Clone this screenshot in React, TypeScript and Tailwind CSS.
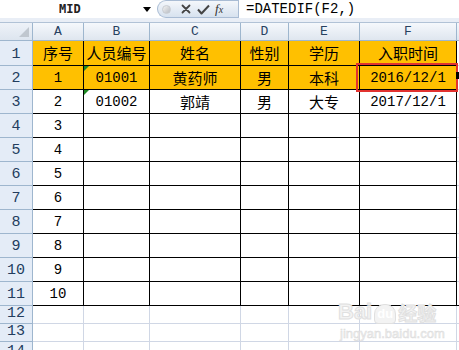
import React from "react";

const COLS = ["A", "B", "C", "D", "E", "F"];
const rows: string[][] = [
  ["序号", "人员编号", "姓名", "性别", "学历", "入职时间"],
  ["1", "01001", "黄药师", "男", "本科", "2016/12/1"],
  ["2", "01002", "郭靖", "男", "大专", "2017/12/1"],
  ["3", "", "", "", "", ""],
  ["4", "", "", "", "", ""],
  ["5", "", "", "", "", ""],
  ["6", "", "", "", "", ""],
  ["7", "", "", "", "", ""],
  ["8", "", "", "", "", ""],
  ["9", "", "", "", "", ""],
  ["10", "", "", "", "", ""],
];

const cjk = "font-['Noto_Sans_CJK_SC',sans-serif]";
const mono = "font-['Liberation_Mono','Noto_Sans_CJK_SC',monospace]";

function isCjk(s: string) {
  return /[\u4e00-\u9fff]/.test(s);
}

export default function App() {
  const rowHeights = [25, 24, 24, 24, 24, 24, 24, 24, 24, 24, 24];
  return (
    <div className="relative w-[459px] h-[350px] overflow-hidden bg-white">
      {/* formula bar */}
      <div className="flex h-[18px] bg-white">
        <div className="relative w-[157px] flex items-center">
          <span className="absolute left-[59px] top-[2px] text-[12px] leading-[14px] font-bold text-[#222] font-['DejaVu_Sans_Mono',monospace]">
            MID
          </span>
          <span className="absolute left-[143px] top-[7px] w-0 h-0 border-l-[4px] border-r-[4px] border-t-[5px] border-l-transparent border-r-transparent border-t-black" />
        </div>
        <div className="relative w-[81px] h-[18px] rounded-l-full border border-r-0 border-[#a9bcd4] bg-gradient-to-b from-[#f4f7fb] to-[#d7e2ef] flex items-center">
          <span className="ml-[4px] w-[9px] h-[9px] rounded-full bg-gradient-to-br from-[#f4f4f4] to-[#b8bcc2] border border-[#c8ccd2]" />
          <svg className="ml-[10px]" width="10" height="10" viewBox="0 0 10 10">
            <path d="M1.5 1.5 L8.5 8.5 M8.5 1.5 L1.5 8.5" stroke="#444" strokeWidth="1.8" strokeLinecap="round" />
          </svg>
          <svg className="ml-[6px]" width="13" height="11" viewBox="0 0 13 11">
            <path d="M1 5.5 L4.5 9.5 L12 1.5" stroke="#444" strokeWidth="2" fill="none" strokeLinejoin="round" />
          </svg>
          <span className="ml-[5px] text-[13px] leading-[14px] italic font-['Liberation_Serif',serif] text-[#333]">
            f<span className="text-[10px]">x</span>
          </span>
        </div>
        <div className="flex-1 border-l border-[#a9bcd4] flex items-center pl-[7px]">
          <span className={`text-[14px] leading-[16px] text-black ${mono}`}>=DATEDIF(F2,)</span>
        </div>
      </div>
      <div className="h-[5px] bg-[#e9eef6] border-b border-[#b1c2d6]" />

      {/* grid */}
      <div
        className="grid grid-cols-[33px_51px_66px_91px_48px_71px_97px_1fr]"
        style={{ gridTemplateRows: `18px ${rowHeights.map((h) => h + "px").join(" ")} 18px 18px 20px` }}
      >
        {/* header row */}
        <div className="relative border-r border-b border-[#9eb6ce] bg-gradient-to-b from-[#eef2f8] to-[#dde5ef]">
          <span
            className="absolute right-[3px] bottom-[3px] w-0 h-0"
            style={{ borderBottom: "10px solid #c0c7cf", borderLeft: "10px solid transparent", borderTop: "0", borderRight: "0" }}
          />
        </div>
        {COLS.map((c) => (
          <div
            key={c}
            className="border-r border-b border-[#9eb6ce] bg-gradient-to-b from-[#f5f8fc] to-[#dfe6ef] flex items-center justify-center text-[13px] leading-[14px] text-[#27415f] font-['Liberation_Mono',monospace]"
          >
            {c}
          </div>
        ))}
        <div className="border-b border-[#9eb6ce] bg-gradient-to-b from-[#f5f8fc] to-[#dfe6ef]" />

        {rows.map((r, ri) => (
          <React.Fragment key={ri}>
            <div className="border-r border-b border-[#9eb6ce] bg-[#e4ecf7] flex items-end justify-center pb-[1px] text-[15px] leading-[18px] text-[#233d5e] font-['Liberation_Mono',monospace]">
              {ri + 1}
            </div>
            {r.map((v, ci) => (
              <div
                key={ci}
                className={`relative border-r border-b border-black flex items-center justify-center text-black ${
                  ri < 2 ? "bg-[#ffc000]" : "bg-white"
                } ${isCjk(v) ? `text-[15px] leading-[18px] ${cjk}` : `text-[14px] leading-[16px] ${mono}`}`}
              >
                {ci === 1 && (ri === 1 || ri === 2) && (
                  <span className="absolute left-0 top-0 w-0 h-0 border-t-[5px] border-r-[5px] border-t-[#1f8a24] border-r-transparent" />
                )}
                {v}
              </div>
            ))}
            <div className={`border-b ${ri === 10 ? "border-black" : "border-[#d0d7e5]"}`} />
          </React.Fragment>
        ))}

        {[12, 13, 14].map((n) => (
          <React.Fragment key={n}>
            <div className="border-r border-b border-[#9eb6ce] bg-[#e4ecf7] flex items-end justify-center text-[15px] leading-[18px] text-[#233d5e] font-['Liberation_Mono',monospace]">
              {n}
            </div>
            {[0, 1, 2, 3, 4, 5].map((ci) => (
              <div key={ci} className="border-r border-b border-[#d0d7e5] bg-white" />
            ))}
            <div className="border-b border-[#d0d7e5]" />
          </React.Fragment>
        ))}
      </div>

      {/* active cell annotation */}
      <div className="absolute left-[356px] top-[63px] w-[102px] h-[29px] border-2 border-[#e2322f]" />
      <div className="absolute left-[456px] top-[72px] w-[3px] h-[7px] bg-black" />

      {/* watermark */}
      <div className="absolute left-[338px] top-[300px] pointer-events-none select-none">
        <div className="flex items-end">
          <span className="text-[22px] leading-[24px] font-bold text-[#f3f3f3] font-['Liberation_Sans',sans-serif] [-webkit-text-stroke:1px_#e0e0e0]">Bai</span>
          <span className="ml-[2px] w-[22px] h-[20px] rounded-t-[10px] rounded-b-[4px] border border-[#e0e0e0] bg-[#f3f3f3] text-[13px] leading-[18px] text-white font-bold text-center font-['Liberation_Sans',sans-serif]">du</span>
          <span className={`ml-[2px] text-[19px] leading-[22px] font-bold text-[#f3f3f3] [-webkit-text-stroke:1px_#e0e0e0] ${cjk}`}>经验</span>
        </div>
        <div className="ml-[2px] mt-[3px] text-[13px] leading-[14px] text-[#efefef] [-webkit-text-stroke:0.5px_#dcdcdc] font-['Liberation_Sans',sans-serif]">
          jingyan.baidu.com
        </div>
      </div>
    </div>
  );
}
